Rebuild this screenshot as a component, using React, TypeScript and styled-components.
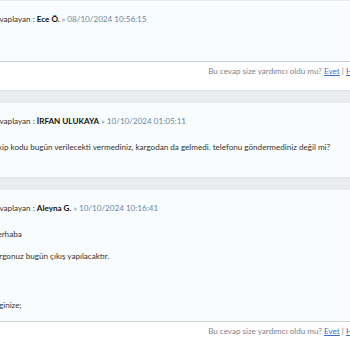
import React from 'react'
import styled, { createGlobalStyle } from 'styled-components'

const GlobalStyle = createGlobalStyle`
  html, body {
    margin: 0;
    padding: 0;
    background: #e9edf0;
    overflow: hidden;
  }
  * {
    box-sizing: border-box;
  }
`

// the page is seen cropped: the left edge of the text column sits just off-screen
const Page = styled.div`
  width: 400px;
  margin-left: -26px;
  padding-top: 1px;
  display: flex;
  flex-direction: column;
  gap: 13px;
  font-family: 'Lato', 'Noto Sans', sans-serif;
`

const Card = styled.div`
  background: #f9fcfc;
  box-shadow: 0 1px 2px rgba(0, 0, 0, 0.06);
`

const Content = styled.div<{ $min?: number }>`
  padding: 9px 16px 4px;
  min-height: ${(p) => p.$min ?? 0}px;
`

const Header = styled.div`
  font-size: 8.1px;
  line-height: 18px;
  color: #333;
  white-space: nowrap;
`

const Name = styled.b`
  font-weight: 700;
  color: #111;
`

const Date = styled.span`
  color: #6a86a3;
`

const Body = styled.div`
  margin-top: 6px;
  font-size: 8.1px;
  line-height: 22px;
  color: #333;
`

const Line = styled.p<{ $gap?: number }>`
  margin: 0;
  margin-top: ${(p) => p.$gap ?? 0}px;
  white-space: nowrap;
`

const Footer = styled.div`
  background: #ffffff;
  border-top: 1px solid #cdd4d9;
  padding: 1px 9px 0 0;
  height: 29px;
  text-align: right;
  font-size: 8.1px;
  line-height: 16px;
  color: #7d8590;
  white-space: nowrap;
`

const Link = styled.a`
  color: #3f6fc4;
  text-decoration: underline;
`

const answers = [
  {
    name: 'Ece Ö.',
    date: '08/10/2024 10:56:15',
    lines: [] as { text: string; gap?: number }[],
    helpful: true,
    min: 60,
  },
  {
    name: 'İRFAN ULUKAYA',
    date: '10/10/2024 01:05:11',
    lines: [
      { text: 'Takip kodu bugün verilecekti vermediniz, kargodan da gelmedi. telefonu göndermediniz değil mi?' },
    ],
    helpful: false,
    min: 74,
  },
  {
    name: 'Aleyna G.',
    date: '10/10/2024 10:16:41',
    lines: [
      { text: 'Merhaba' },
      { text: 'Kargonuz bugün çıkış yapılacaktır.' },
      { text: 'Bilginize;', gap: 27 },
    ],
    helpful: true,
    min: 131,
  },
]

const App = () => {
  return (
    <>
      <GlobalStyle />
      <Page>
        {answers.map((a) => (
          <Card key={a.date}>
            <Content $min={a.min}>
              <Header>
                Cevaplayan : <Name>{a.name}</Name> <Date>» {a.date}</Date>
              </Header>
              {a.lines.length > 0 && (
                <Body>
                  {a.lines.map((l) => (
                    <Line key={l.text} $gap={l.gap}>
                      {l.text}
                    </Line>
                  ))}
                </Body>
              )}
            </Content>
            {a.helpful && (
              <Footer>
                Bu cevap size yardımcı oldu mu? <Link href="#">Evet</Link> | <Link href="#">Hayır</Link>
              </Footer>
            )}
          </Card>
        ))}
      </Page>
    </>
  )
}

export default App
